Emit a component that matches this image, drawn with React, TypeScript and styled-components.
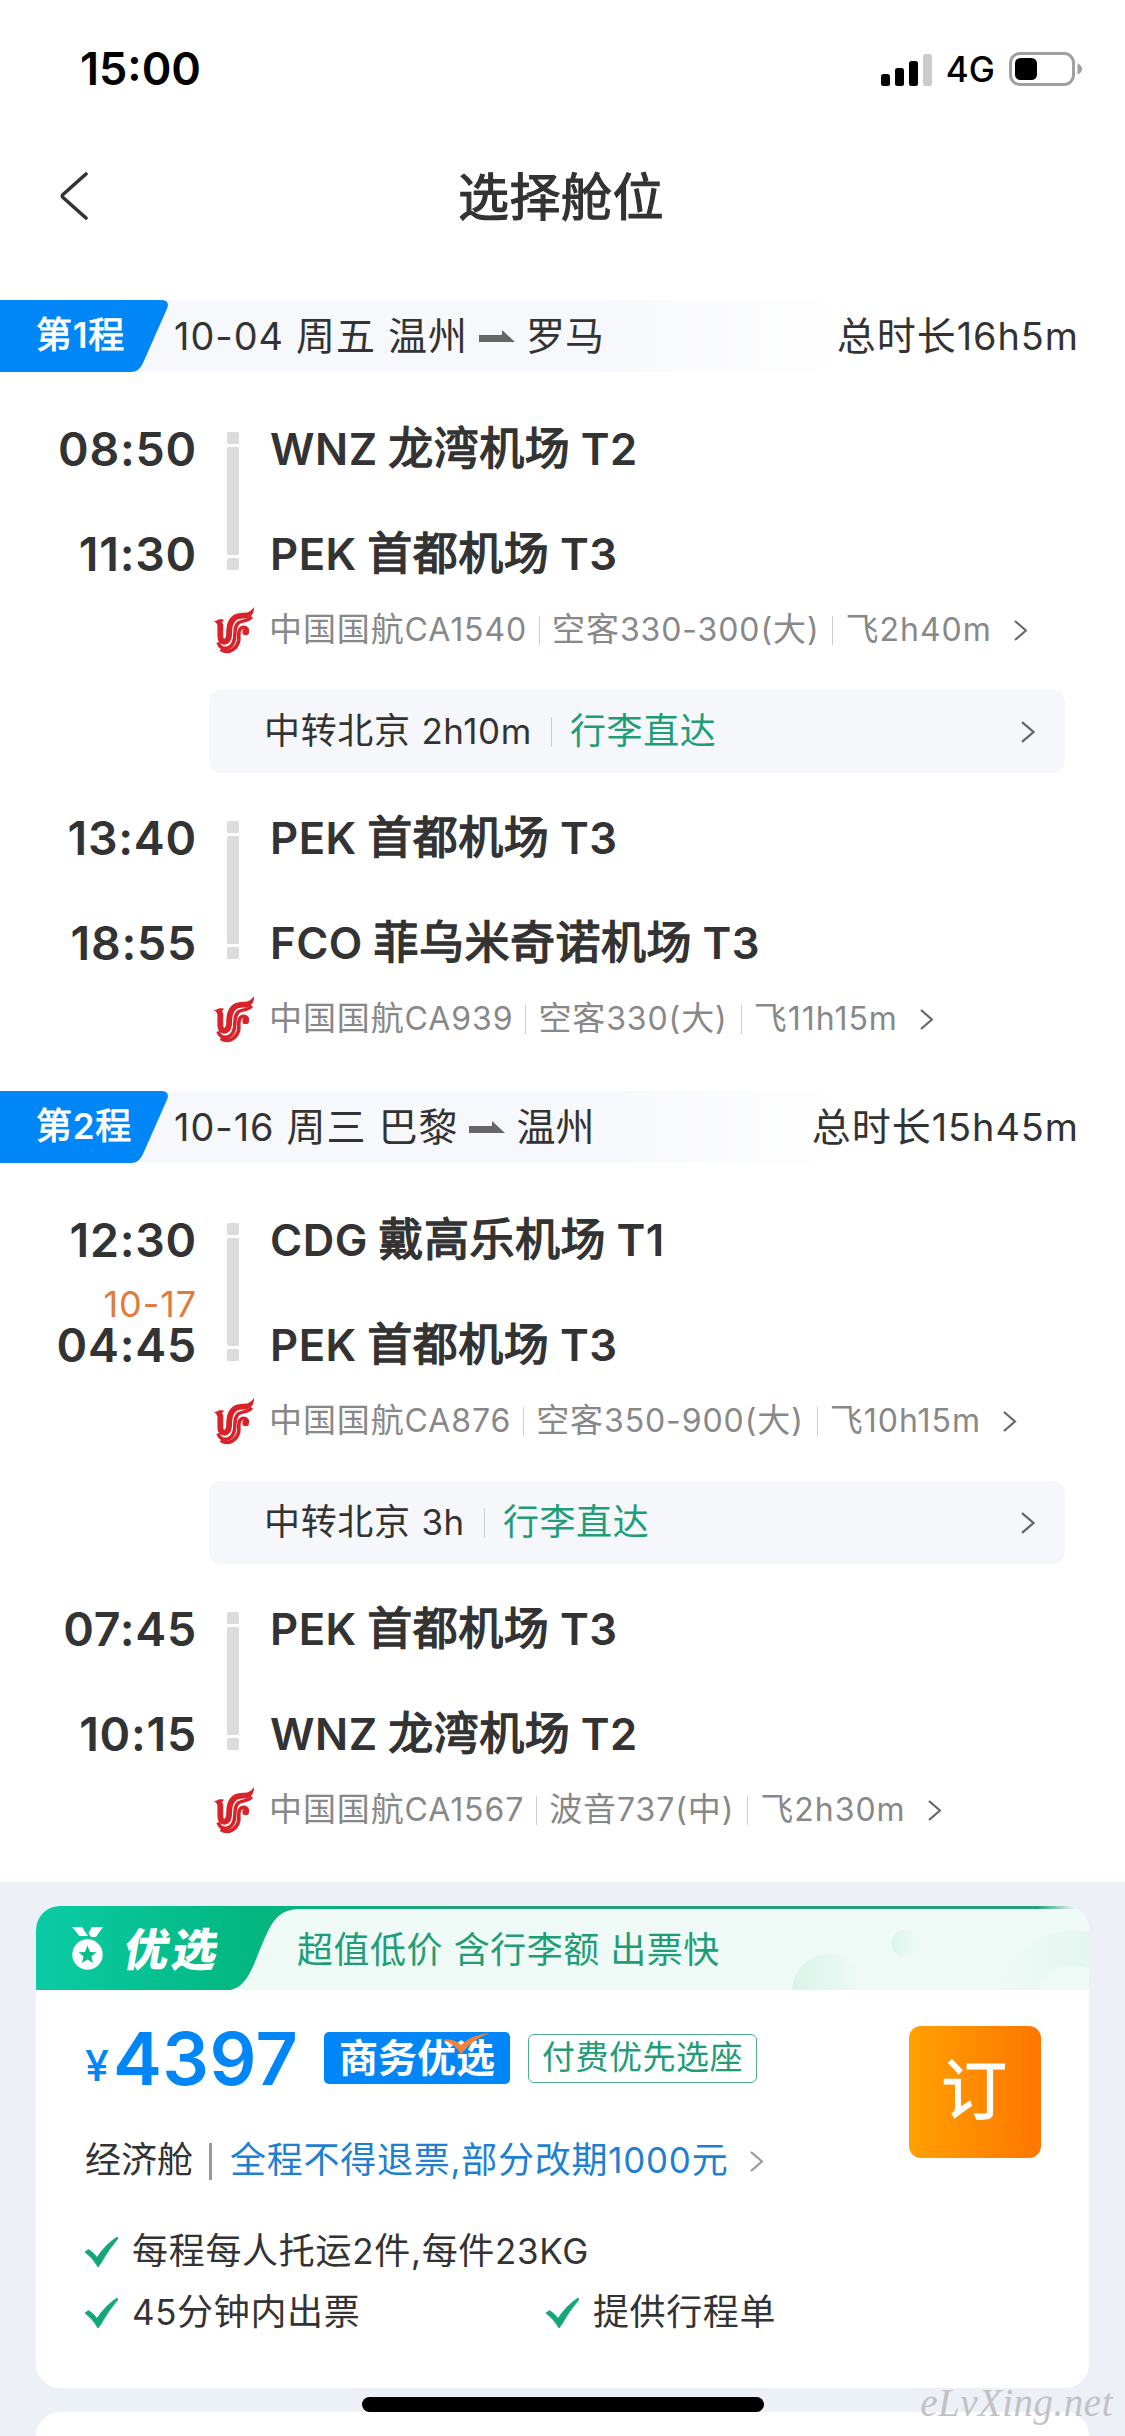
import React from "react";
import styled, { createGlobalStyle } from "styled-components";

const GlobalStyle = createGlobalStyle`
  *, *::before, *::after { box-sizing: border-box; }
  html, body { margin: 0; padding: 0; background: #fff; }
  body {
    width: 1125px;
    font-family: Inter, "Noto Sans CJK SC", sans-serif;
    color: #333;
    -webkit-font-smoothing: antialiased;
  }
`;

const Screen = styled.main`
  width: 1125px;
  height: 2436px;
  overflow: hidden;
  position: relative;
  display: flex;
  flex-direction: column;
  background: #fff;
`;

const LatinRun = styled.span<{ $strong?: boolean }>`
  font-size: 0.97em;
  font-weight: ${(p) => (p.$strong ? 600 : "inherit")};
  -webkit-text-stroke-width: 0;
`;

/* Latin glyphs run slightly large beside the Chinese ones, so they are set a touch smaller. */
function Mixed({ children, strong }: { children: string; strong?: boolean }) {
  return (
    <>
      {children
        .split(/([\x21-\x7e]+)/)
        .filter(Boolean)
        .map((part, i) =>
          /^[\x21-\x7e]/.test(part) ? (
            <LatinRun key={i} $strong={strong}>{part}</LatinRun>
          ) : (
            part
          )
        )}
    </>
  );
}

const Label = styled.span<{ $size: number; $color?: string; $weight?: number; $track?: number; $stroke?: number }>`
  font-size: ${(p) => p.$size}px;
  line-height: 1.2;
  color: ${(p) => p.$color ?? "#333"};
  font-weight: ${(p) => p.$weight ?? 400};
  letter-spacing: ${(p) => p.$track ?? 0}px;
  -webkit-text-stroke: ${(p) => p.$stroke ?? 0}px currentColor;
  white-space: pre;
`;

const TimeLabel = styled.span`
  font-size: 46.5px;
  line-height: 48px;
  font-weight: 600;
  letter-spacing: 0.75px;
  white-space: pre;
`;

const AirportLabel = styled(Label)`
  word-spacing: -2.6px;
`;

/* ---------- status bar and title ---------- */

const StatusBar = styled.div`
  flex: none;
  height: 138px;
  padding: 0 43px 0 80px;
  display: flex;
  align-items: center;
  justify-content: space-between;
`;

const StatusIcons = styled.div`
  display: flex;
  align-items: center;
  gap: 14px;
`;

const NavBar = styled.header`
  flex: none;
  height: 162px;
  padding: 0 60px 46px;
  display: grid;
  grid-template-columns: 28px 1fr 31px;
  align-items: center;
  justify-items: center;
`;

const Title = styled.h1`
  margin: 0;
  padding-top: 3px;
  font-weight: 400;
  display: flex;
`;

function SignalIcon() {
  return (
    <svg width="51" height="33" viewBox="0 0 51 33">
      <rect x="0" y="21" width="9" height="12" rx="2.5" fill="#000" />
      <rect x="14" y="15" width="9" height="18" rx="2.5" fill="#000" />
      <rect x="28" y="8" width="9" height="25" rx="2.5" fill="#000" />
      <rect x="42" y="1" width="9" height="32" rx="2.5" fill="#cbcbcb" />
    </svg>
  );
}

function BatteryIcon() {
  return (
    <svg width="73" height="34" viewBox="0 0 73 34">
      <rect x="1.5" y="1.5" width="63" height="31" rx="9.5" fill="none" stroke="#a0a0a0" strokeWidth="3" />
      <rect x="6" y="6" width="22" height="22" rx="5.5" fill="#000" />
      <path d="M68.5 11.5c3 1 4.5 3 4.5 5.5s-1.500 4.500-4.500 5.500z" fill="#a0a0a0" />
    </svg>
  );
}

function BackIcon() {
  return (
    <svg width="28" height="48" viewBox="0 0 28 48" fill="none" stroke="#333" strokeWidth="3.6" strokeLinecap="round" strokeLinejoin="round">
      <path d="M26 2 3 22.500Q1.500 24 3 25.500L26 46" />
    </svg>
  );
}

function Chevron({ size = 21, color = "#666", width = 2.2 }: { size?: number; color?: string; width?: number }) {
  return (
    <svg width={size * 0.64} height={size} viewBox="0 0 13.500 21" fill="none" stroke={color} strokeWidth={width} strokeLinejoin="miter">
      <path d="M1 1 12 10.500 1 20" />
    </svg>
  );
}

/* ---------- itinerary ---------- */

const LegHeader = styled.div`
  flex: none;
  height: 72px;
  display: grid;
  grid-template-columns: 174px 1fr auto;
  align-items: center;
  padding-right: 46px;
  background: linear-gradient(90deg, #f7f8fb 0, #f7f8fb 600px, #fff 850px);
`;

const LegBadge = styled.div`
  height: 72px;
  width: 168px;
  padding-left: 36px;
  display: grid;
  align-items: center;
  & > * { grid-area: 1 / 1; }
`;

const BadgeShape = styled.svg`
  display: block;
  margin-left: -36px;
`;

const LegRoute = styled.div`
  display: flex;
  align-items: center;
  gap: 11px;
`;

const LegBody = styled.div`
  flex: none;
  padding: 25px 60px 49px 0;
  display: flex;
  flex-direction: column;
`;

const Flight = styled.section`
  height: 256px;
  display: grid;
  grid-template-columns: 197px 12px 1fr;
  grid-template-rows: 105px 105px 46px;
  column-gap: 30px;
`;

const TimeCell = styled.div`
  display: flex;
  flex-direction: column;
  justify-content: center;
  align-items: flex-end;
  height: 105px;
  padding-bottom: 1px;
`;

const DayNote = styled.div`
  height: 34px;
  margin-top: -34px;
  font-size: 36px;
  line-height: 34px;
  letter-spacing: 0.9px;
  color: #e07b39;
  white-space: pre;
`;

const AirportCell = styled.div<{ $arrival?: boolean }>`
  grid-column: 3;
  grid-row: ${(p) => (p.$arrival ? 2 : 1)};
  height: 105px;
  padding-left: 1px;
  display: flex;
  align-items: center;
`;

const Timeline = styled.div`
  grid-row: 1 / 3;
  grid-column: 2;
  padding: 35px 0 37px;
  display: flex;
  flex-direction: column;
  gap: 3px;
`;

const Tick = styled.i<{ $grow?: boolean }>`
  flex: ${(p) => (p.$grow ? "1" : "0 0 12px")};
  border-radius: 1.5px;
  background: #dcdcdc;
`;

const FlightMeta = styled.div`
  grid-row: 3;
  grid-column: 1 / 4;
  padding-left: 213px;
  display: flex;
  align-items: center;
`;

const MetaText = styled.div`
  padding-left: 14px;
  display: flex;
  align-items: center;
`;

const Divider = styled.i<{ $h: number; $w?: number; $color?: string; $ml: number; $mr: number }>`
  flex: none;
  width: ${(p) => p.$w ?? 1}px;
  height: ${(p) => p.$h}px;
  margin: 0 ${(p) => p.$mr}px 0 ${(p) => p.$ml}px;
  background: ${(p) => p.$color ?? "#ccc"};
`;

const MetaArrow = styled.div`
  margin-left: 22px;
  display: flex;
`;

const TransferBox = styled.div`
  height: 83px;
  margin: 37px 0 13px 209px;
  padding: 0 30px 0 55px;
  border-radius: 12px;
  background: #f5f7fb;
  display: flex;
  align-items: center;
`;

const Spacer = styled.div`
  flex: 1;
`;

function AirlineLogo() {
  return (
    <svg width="42" height="47" viewBox="27 26 126 141">
      <path d="M27 66C34 70 40 66 46 63C54 62 60 64 62 66C55 66 54 70 56 76L40 80C38 74 32 70 27 66Z" fill="#d8232a" />
      <path d="M150 26C151 46 141 58 124 60L106 47C128 47 142 38 150 26Z" fill="#d8232a" />
      <g fill="none" stroke="#d8232a">
        <path d="M49 76V114C49 136 72 136 75 112C76 90 75 70 94 57C104 51 116 53 128 51" strokeWidth="17.500" />
        <path d="M42 132C52 160 84 154 91 124C95 100 89 86 104 73C116 65 132 70 143 55" strokeWidth="10.500" />
        <path d="M50 153C74 168 98 152 104 128C106 112 100 96 112 89C122 84 131 90 130 98" strokeWidth="11" />
      </g>
      <circle cx="125" cy="101" r="10" fill="#d8232a" />
    </svg>
  );
}

function RouteArrow() {
  return (
    <svg width="36" height="12" viewBox="0 0 36 12">
      <path d="M0 5H23V0L36 12H0z" fill="#666" />
    </svg>
  );
}

type FlightData = {
  dep: string;
  arr: string;
  note?: string;
  from: string;
  to: string;
  meta: [string, string, string];
};

type LegData = {
  tag: string;
  date: string;
  dest: string;
  total: string;
  flights: [FlightData, FlightData];
  transfer: string;
};

const legs: LegData[] = [
  {
    tag: "第1程",
    date: "10-04 周五 温州",
    dest: "罗马",
    total: "总时长16h5m",
    transfer: "中转北京 2h10m",
    flights: [
      { dep: "08:50", arr: "11:30", from: "WNZ 龙湾机场 T2", to: "PEK 首都机场 T3", meta: ["中国国航CA1540", "空客330-300(大)", "飞2h40m"] },
      { dep: "13:40", arr: "18:55", from: "PEK 首都机场 T3", to: "FCO 菲乌米奇诺机场 T3", meta: ["中国国航CA939", "空客330(大)", "飞11h15m"] },
    ],
  },
  {
    tag: "第2程",
    date: "10-16 周三 巴黎",
    dest: "温州",
    total: "总时长15h45m",
    transfer: "中转北京 3h",
    flights: [
      { dep: "12:30", arr: "04:45", note: "10-17", from: "CDG 戴高乐机场 T1", to: "PEK 首都机场 T3", meta: ["中国国航CA876", "空客350-900(大)", "飞10h15m"] },
      { dep: "07:45", arr: "10:15", from: "PEK 首都机场 T3", to: "WNZ 龙湾机场 T2", meta: ["中国国航CA1567", "波音737(中)", "飞2h30m"] },
    ],
  },
];

function FlightView({ data }: { data: FlightData }) {
  return (
    <Flight>
      <TimeCell>
        <TimeLabel>{data.dep}</TimeLabel>
      </TimeCell>
      <Timeline><Tick /><Tick $grow /><Tick /></Timeline>
      <AirportCell>
        <AirportLabel $size={45} $stroke={1.4} $track={0.5}><Mixed strong>{data.from}</Mixed></AirportLabel>
      </AirportCell>
      <TimeCell>
        {data.note && <DayNote>{data.note}</DayNote>}
        <TimeLabel>{data.arr}</TimeLabel>
      </TimeCell>
      <AirportCell $arrival>
        <AirportLabel $size={45} $stroke={1.4} $track={0.5}><Mixed strong>{data.to}</Mixed></AirportLabel>
      </AirportCell>
      <FlightMeta>
        <AirlineLogo />
        <MetaText>
          <Label $size={33} $color="#888" $track={0.9}><Mixed>{data.meta[0]}</Mixed></Label>
          <Divider $h={29} $ml={12} $mr={12} />
          <Label $size={33} $color="#888" $track={0.9}><Mixed>{data.meta[1]}</Mixed></Label>
          <Divider $h={29} $ml={13} $mr={12} />
          <Label $size={33} $color="#888" $track={1}><Mixed>{data.meta[2]}</Mixed></Label>
          <MetaArrow><Chevron /></MetaArrow>
        </MetaText>
      </FlightMeta>
    </Flight>
  );
}

function Leg({ data }: { data: LegData }) {
  return (
    <>
      <LegHeader>
        <LegBadge>
          <BadgeShape width="168" height="72" viewBox="0 0 168 72">
            <path d="M0 0H161Q170 0 167.300 8L143 63Q139 72 131 72H0Z" fill="#0086f6" />
          </BadgeShape>
          <Label $size={36} $track={0.7} $color="#fff" $stroke={1}><Mixed strong>{data.tag}</Mixed></Label>
        </LegBadge>
        <LegRoute>
          <Label $size={39} $track={1}><Mixed>{data.date}</Mixed></Label>
          <RouteArrow />
          <Label $size={39}><Mixed>{data.dest}</Mixed></Label>
        </LegRoute>
        <Label $size={39} $track={1}><Mixed>{data.total}</Mixed></Label>
      </LegHeader>
      <LegBody>
        <FlightView data={data.flights[0]} />
        <TransferBox>
          <Label $size={36} $track={0.65}><Mixed>{data.transfer}</Mixed></Label>
          <Divider $h={30} $ml={19} $mr={18} />
          <Label $size={36} $track={0.6} $color="#1f9d77">行李直达</Label>
          <Spacer />
          <Chevron size={22} />
        </TransferBox>
        <FlightView data={data.flights[1]} />
      </LegBody>
    </>
  );
}

/* ---------- fare panel ---------- */

const FarePanel = styled.div`
  flex: 1;
  padding: 24px 36px 0;
  background: #edf0f6;
  display: flex;
  flex-direction: column;
  gap: 24px;
`;

const FareCard = styled.section`
  flex: none;
  height: 482px;
  border-radius: 24px;
  background: #fff;
  overflow: hidden;
`;

const NextCard = styled.section`
  flex: none;
  height: 80px;
  border-radius: 24px;
  background: #fff;
`;

const Ribbon = styled.div`
  height: 84px;
  display: grid;
  & > * { grid-area: 1 / 1; }
`;

const RibbonContent = styled.div`
  display: flex;
  align-items: center;
  padding-left: 36px;
`;

const Picked = styled.span`
  width: 194px;
  padding: 0 0 4px 22px;
  font: 900 45px/1 "Noto Sans CJK SC", sans-serif;
  letter-spacing: 3px;
  color: #fff;
  transform: skewX(-10deg);
`;

const Slogan = styled(Label)`
  padding-top: 5px;
`;

function RibbonArt() {
  return (
    <svg width="1053" height="84" viewBox="0 0 1053 84">
      <defs>
        <linearGradient id="tab" x1="0" x2="1">
          <stop offset="0" stopColor="#0bcba6" />
          <stop offset="0.850" stopColor="#02b67d" />
        </linearGradient>
        <linearGradient id="edge" x1="0" x2="1">
          <stop offset="0" stopColor="#02b67d" />
          <stop offset="0.2" stopColor="#22a07c" />
          <stop offset="0.935" stopColor="#22a07c" />
          <stop offset="0.985" stopColor="#effaf6" />
        </linearGradient>
        <linearGradient id="dot" x1="0" x2="1">
          <stop offset="0" stopColor="#d9f5ea" />
          <stop offset="1" stopColor="#effaf7" />
        </linearGradient>
        <linearGradient id="ring" x1="0" x2="1">
          <stop offset="0" stopColor="#edf9f5" />
          <stop offset="1" stopColor="#dcf5ec" />
        </linearGradient>
      </defs>
      <rect width="1053" height="84" fill="#effaf6" />
      <rect x="257" width="796" height="3" fill="url(#edge)" />
      <circle cx="793" cy="85" r="37" fill="url(#dot)" />
      <circle cx="869" cy="37.500" r="13.500" fill="url(#dot)" />
      <circle cx="1037" cy="101" r="59" fill="none" stroke="url(#ring)" strokeWidth="35" />
      <path d="M0 0H262V3C242 4 236 16 228 34C218 56 212 84 191 84H0Z" fill="url(#tab)" />
    </svg>
  );
}

function MedalIcon() {
  return (
    <svg width="31" height="43" viewBox="0 0 31 43">
      <path d="M0 0H10L16 9H7.500zM20 0H31L24 10H19L16.500 6z" fill="#fff" />
      <circle cx="15.500" cy="27.500" r="15.200" fill="#fff" />
      <path d="M15.500 18.500 18 25l6.500.3-5.100 4.200 1.700 6.500-5.600-3.600-5.600 3.600 1.700-6.500L6.500 25.300 13 25z" fill="#04be8c" />
    </svg>
  );
}

const FareBody = styled.div`
  padding: 36px 48px 0 49px;
  display: grid;
  grid-template-columns: 1fr 132px;
  grid-template-rows: 132px auto;
`;

const PriceColumn = styled.div`
  display: flex;
  flex-direction: column;
`;

const PriceRow = styled.div`
  height: 64px;
  display: flex;
  align-items: center;
`;

const Price = styled.div`
  width: 239px;
  display: flex;
  align-items: baseline;
  line-height: 64px;
  font-weight: 600;
  color: #0086f6;
  white-space: nowrap;
`;

const Yen = styled.span`
  width: 28px;
  font-size: 43px;
  font-weight: 500;
  line-height: 1;
  transform: translateY(-4px);
`;

const Amount = styled.span`
  font-size: 73.5px;
  line-height: 67px;
  letter-spacing: 0.4px;
`;

const BusinessTag = styled.div`
  position: relative;
  width: 186px;
  height: 52px;
  border-radius: 5px;
  background: #0086f6;
  display: flex;
  align-items: center;
  justify-content: center;
`;

const TagCheck = styled.svg`
  position: absolute;
  left: 119px;
  top: 1px;
`;

const SeatTag = styled.div`
  height: 49px;
  width: 229px;
  margin-left: 18px;
  border: 1px solid #4fae92;
  border-radius: 6px;
  display: flex;
  align-items: center;
  justify-content: center;
`;

const CabinRow = styled.div`
  margin-top: 50px;
  height: 42px;
  display: flex;
  align-items: center;
`;

const OrderButton = styled.button`
  width: 132px;
  height: 132px;
  padding: 0 2px 14px 0;
  border: 0;
  border-radius: 12px;
  background: linear-gradient(90deg, #ffa000, #ff7700);
  color: #fff;
  font: 400 66px/1 "Noto Sans CJK SC", sans-serif;
  -webkit-text-stroke: 1px #fff;
`;

const Perks = styled.div`
  grid-column: 1 / 3;
  margin-top: 63px;
  display: grid;
  grid-template-columns: 461px 1fr;
  grid-auto-rows: 61px;
`;

const Perk = styled.div<{ $wide?: boolean }>`
  grid-column: ${(p) => (p.$wide ? "1 / 3" : "auto")};
  display: flex;
  align-items: center;
  gap: 14px;
`;

function CheckMark() {
  return (
    <svg width="33" height="30" viewBox="0 0 33 30">
      <path d="M0 15 3.500 12.500Q8 15 12 20.500Q20 8 32 0L33 1.500Q23 13 16 26L13 30Q8 21 0 15Z" fill="#12a67a" stroke="#12a67a" strokeWidth="0.8" />
    </svg>
  );
}

const HomeIndicator = styled.div`
  position: absolute;
  left: 362px;
  bottom: 24px;
  width: 402px;
  height: 15px;
  border-radius: 7.5px;
  background: #000;
`;

const Watermark = styled.div`
  position: absolute;
  right: 12px;
  bottom: 14px;
  font: italic 400 39px/1 "Liberation Serif", serif;
  letter-spacing: 0.5px;
  color: #c2c2c4;
`;

export default function App() {
  return (
    <Screen>
      <GlobalStyle />
      <StatusBar>
        <Label $size={45} $weight={600} $color="#000">15:00</Label>
        <StatusIcons>
          <SignalIcon />
          <Label $size={35} $weight={500} $color="#000">4G</Label>
          <BatteryIcon />
        </StatusIcons>
      </StatusBar>
      <NavBar>
        <BackIcon />
        <Title><Label $size={51} $track={0.5} $stroke={1.2}>选择舱位</Label></Title>
      </NavBar>

      {legs.map((leg) => (
        <Leg key={leg.tag} data={leg} />
      ))}

      <FarePanel>
        <FareCard>
          <Ribbon>
            <RibbonArt />
            <RibbonContent>
              <MedalIcon />
              <Picked>优选</Picked>
              <Slogan $size={36} $track={0.5} $color="#1f9d77">超值低价 含行李额 出票快</Slogan>
            </RibbonContent>
          </Ribbon>
          <FareBody>
            <PriceColumn>
              <PriceRow>
                <Price><Yen>¥</Yen><Amount>4397</Amount></Price>
                <BusinessTag>
                  <Label $size={39} $weight={700} $color="#fff">商务优选</Label>
                  <TagCheck width="48" height="22" viewBox="0 0 48 22">
                    <path d="M0 7Q9 5 18 12Q30 1 47 0Q30 6 18 21Q12 11 0 7Z" fill="#f5803a" />
                  </TagCheck>
                </BusinessTag>
                <SeatTag><Label $size={33} $track={0.5} $color="#1f9d77">付费优先选座</Label></SeatTag>
              </PriceRow>
              <CabinRow>
                <Label $size={36}>经济舱</Label>
                <Divider $h={37} $w={3} $color="#999" $ml={16} $mr={18} />
                <Label $size={36} $track={0.75} $color="#1f7fd0"><Mixed>全程不得退票,部分改期1000元</Mixed></Label>
                <MetaArrow><Chevron color="#999" /></MetaArrow>
              </CabinRow>
            </PriceColumn>
            <OrderButton>订</OrderButton>
            <Perks>
              <Perk $wide><CheckMark /><Label $size={36} $track={0.7}><Mixed>每程每人托运2件,每件23KG</Mixed></Label></Perk>
              <Perk><CheckMark /><Label $size={36} $track={0.65}><Mixed>45分钟内出票</Mixed></Label></Perk>
              <Perk><CheckMark /><Label $size={36} $track={0.6}>提供行程单</Label></Perk>
            </Perks>
          </FareBody>
        </FareCard>
        <NextCard />
      </FarePanel>

      <HomeIndicator />
      <Watermark>eLvXing.net</Watermark>
    </Screen>
  );
}
